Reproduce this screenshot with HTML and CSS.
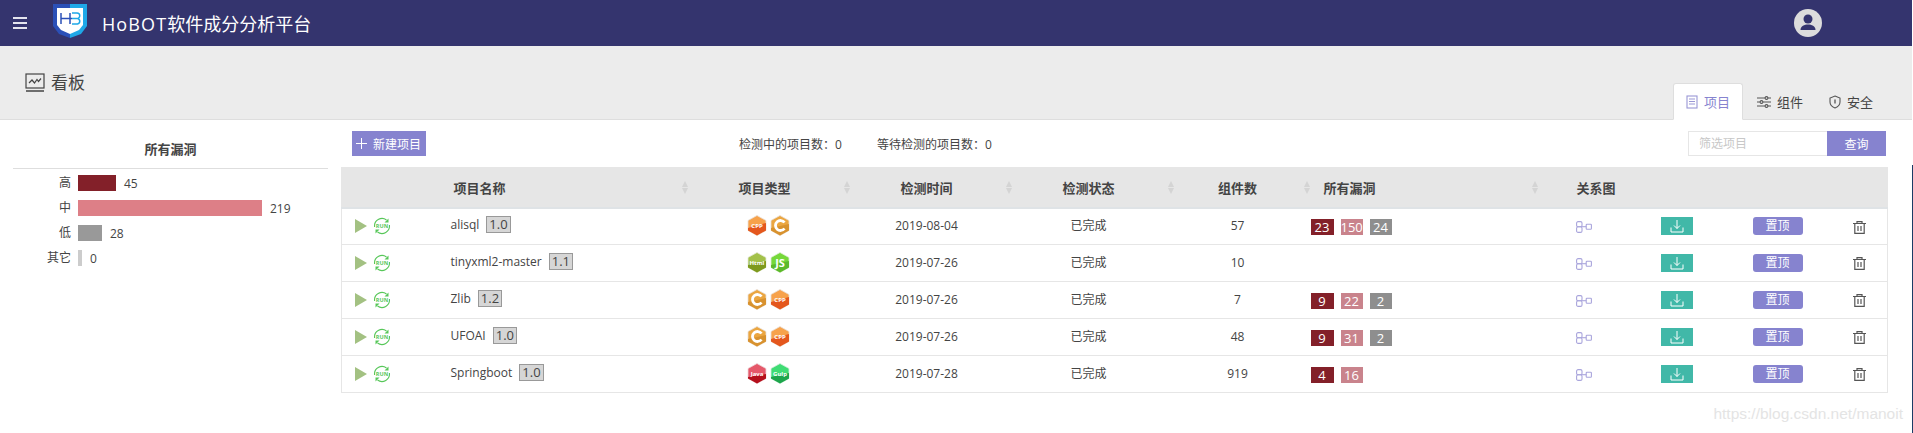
FILE: index.html
```html
<!DOCTYPE html>
<html lang="zh-CN">
<head>
  <meta charset="UTF-8">
  <title>HoBOT软件成分分析平台</title>
  <link rel="stylesheet" href="styles.css">
</head>
<body>
  <svg class="defs" aria-hidden="true">
    <symbol id="i-play" viewBox="0 0 12 14"><path d="M0 0l12 7-12 7z" fill="#a3c182"/></symbol>
    <symbol id="i-arcs" viewBox="0 0 18 18">
      <g fill="none" stroke="#58c75a" stroke-width="1.1">
        <path d="M1.600 10A7.500 7.500 0 0 1 13.500 3"/>
        <path d="M16.400 8A7.500 7.500 0 0 1 4.500 15"/>
      </g>
      <path d="M15.500 1.500v4h-4zM2.500 16.500v-4h4z" fill="#58c75a"/>
    </symbol>
    <symbol id="i-rel" viewBox="0 0 16 12">
      <g fill="none" stroke="#a9a5dc" stroke-width="1.100">
        <rect x="0.600" y="0.600" width="5.400" height="5.200" rx="1.500"/>
        <rect x="0.600" y="5.800" width="5.400" height="5.600" rx="1.500"/>
        <rect x="10.200" y="3.200" width="5.200" height="5" rx="0.800"/>
        <path d="M6 5.700h4.200"/>
      </g>
    </symbol>
    <symbol id="i-down" viewBox="0 0 14 14">
      <g fill="none" stroke="#fff" stroke-width="1">
        <path d="M7 1v8.500M4 6.500L7 9.500l3-3"/>
        <path d="M1 8.500v4.500h12V8.500"/>
      </g>
    </symbol>
    <symbol id="i-trash" viewBox="0 0 13 13">
      <g fill="none" stroke="#555" stroke-width="1.200">
        <path d="M0 2.500h13M4 2.500V.7h5v1.800M1.800 2.500v9.800h9.400V2.500M5 5v5M8 5v5"/>
      </g>
    </symbol>
    <symbol id="h-orange" viewBox="0 0 20 21">
      <path d="M10 .5l9 5v10l-9 5-9-5v-10z" fill="#f7a24b" stroke="#e8e0d8" stroke-width="0.800"/>
      <path d="M19 8v7.500l-9 5-9-5V13z" fill="#e4571d"/>
    </symbol>
    <symbol id="h-amber" viewBox="0 0 20 21">
      <path d="M10 .5l9 5v10l-9 5-9-5v-10z" fill="#eba640" stroke="#e8e0d8" stroke-width="0.800"/>
      <path d="M19 9v6.500l-9 5-9-5V13z" fill="#d8922f"/>
      <path d="M14.500 7.500a5 5 0 1 0 0 6" fill="none" stroke="#fff" stroke-width="2.800"/>
    </symbol>
    <symbol id="h-olive" viewBox="0 0 20 21">
      <path d="M10 .5l9 5v10l-9 5-9-5v-10z" fill="#a3c14a" stroke="#e4e8d8" stroke-width="0.800"/>
      <path d="M19 9v6.500l-9 5-9-5V13z" fill="#7e9a1e"/>
    </symbol>
    <symbol id="h-lime" viewBox="0 0 20 21">
      <path d="M10 .5l9 5v10l-9 5-9-5v-10z" fill="#76d83a" stroke="#e0eed8" stroke-width="0.800"/>
      <path d="M19 9v6.500l-9 5-9-5V13z" fill="#5cb92a"/>
    </symbol>
    <symbol id="h-red" viewBox="0 0 20 21">
      <path d="M10 .5l9 5v10l-9 5-9-5v-10z" fill="#e5586a" stroke="#eed8da" stroke-width="0.800"/>
      <path d="M19 11v4.500l-9 5-9-5V14z" fill="#b4101c"/>
    </symbol>
    <symbol id="h-green" viewBox="0 0 20 21">
      <path d="M10 .5l9 5v10l-9 5-9-5v-10z" fill="#3fdc74" stroke="#d8eede" stroke-width="0.800"/>
      <path d="M19 10v5.500l-9 5-9-5V14z" fill="#1ea54c"/>
    </symbol>
  </svg>

  <header class="topbar">
    <div class="menu-btn"><span></span><span></span><span></span></div>
    <svg class="logo" viewBox="0 0 34 34">
      <path d="M0 0h17v34L6 30 0 22z" fill="#2b50b8"/>
      <path d="M17 0h17v22l-6 8-11 4z" fill="#1fa8e8"/>
      <path d="M4 4h26v17l-4 5-9 4-9-4-4-5z" fill="#fff"/>
      <g fill="none" stroke-width="1.500">
        <path d="M8 9v11M8 14.500h11M17 9v11" stroke="#2b50b8"/>
        <path d="M19 9h5a2.500 2.500 0 0 1 0 5.500h-5M19 14.500h5.500a2.800 2.800 0 0 1 0 5.500H19" stroke="#1fa8e8"/>
      </g>
    </svg>
    <span class="brand"><span class="brand-en">HoBOT</span>软件成分分析平台</span>
    <svg class="avatar" viewBox="0 0 28 28">
      <circle cx="14" cy="14" r="14" fill="#dcdcdc"/>
      <circle cx="14" cy="10" r="4.500" fill="#34346e"/>
      <path d="M6.500 21c0-4 4-5.500 7.500-5.500s7.500 1.500 7.500 5.500z" fill="#34346e"/>
    </svg>
  </header>

  <section class="subhead">
    <h2 class="page-title">
      <svg class="title-icon" viewBox="0 0 20 20">
        <g fill="none" stroke="#444" stroke-width="1.200">
          <rect x="1" y="1" width="18" height="14"/>
          <path d="M4 10l3-3 2.500 3L12 6.500l1.500 2L16 5.500"/>
        </g>
        <path d="M1 18h18" stroke="#444" stroke-width="1.500"/>
      </svg>
      看板
    </h2>
    <nav class="tabs">
      <a class="tab active">
        <svg class="tab-icon" viewBox="0 0 12 14">
          <g fill="none" stroke="#9a97d6" stroke-width="1.100">
            <rect x="1" y="1" width="10" height="12"/>
            <path d="M3 4h6M3 6.500h6M3 9h6"/>
          </g>
        </svg>
        项目
      </a>
      <a class="tab">
        <svg class="tab-icon wide" viewBox="0 0 14 12">
          <g fill="none" stroke="#555" stroke-width="1.100">
            <path d="M0 2h8M11 2h3M0 6h3M6 6h8M0 10h8M11 10h3"/>
            <circle cx="9.500" cy="2" r="1.400"/>
            <circle cx="4.500" cy="6" r="1.400"/>
            <circle cx="9.500" cy="10" r="1.400"/>
          </g>
        </svg>
        组件
      </a>
      <a class="tab">
        <svg class="tab-icon" viewBox="0 0 12 14">
          <path d="M6 1l5 2v4c0 3-2.500 5-5 6-2.500-1-5-3-5-6V3z" fill="none" stroke="#555" stroke-width="1.100"/>
          <path d="M6 4.500v4" stroke="#555" stroke-width="1.300"/>
        </svg>
        安全
      </a>
    </nav>
  </section>

  <main class="content">
    <aside class="side">
      <h3 class="side-title">所有漏洞</h3>
      <div class="bars">
        <span class="bar-label">高</span>
        <div class="bar-wrap"><i class="bar high" style="width:38px"></i>45</div>
        <span class="bar-label">中</span>
        <div class="bar-wrap"><i class="bar mid" style="width:184px"></i>219</div>
        <span class="bar-label">低</span>
        <div class="bar-wrap"><i class="bar low" style="width:24px"></i>28</div>
        <span class="bar-label">其它</span>
        <div class="bar-wrap"><i class="bar other" style="width:4px"></i>0</div>
      </div>
    </aside>

    <div class="panel">
      <div class="toolbar">
        <button class="new-btn">
          <svg class="plus" viewBox="0 0 11 11"><path d="M5.500 0v11M0 5.500h11" stroke="#fff" stroke-width="1"/></svg>
          新建项目
        </button>
        <div class="counts">
          <span>检测中的项目数：0</span>
          <span>等待检测的项目数：0</span>
        </div>
        <div class="search">
          <input class="search-input" placeholder="筛选项目">
          <button class="search-btn">查询</button>
        </div>
      </div>

      <table class="projects">
        <colgroup>
          <col class="c-run"><col class="c-name"><col class="c-type"><col class="c-time"><col class="c-state">
          <col class="c-count"><col class="c-vuln"><col class="c-rel"><col class="c-down"><col class="c-pin"><col class="c-del">
        </colgroup>
        <thead>
          <tr>
            <th></th>
            <th class="left sort">项目名称</th>
            <th class="sort">项目类型</th>
            <th class="sort">检测时间</th>
            <th class="sort">检测状态</th>
            <th class="sort">组件数</th>
            <th class="left sort vuln-head">所有漏洞</th>
            <th class="left rel-head">关系图</th>
            <th></th><th></th><th></th>
          </tr>
        </thead>
        <tbody>
          <tr>
            <td class="run-cell"><svg class="play"><use href="#i-play"/></svg><svg class="run" viewBox="0 0 18 18"><use href="#i-arcs"/><text x="9" y="11" class="run-text">RUN</text></svg></td>
            <td class="name">alisql<span class="ver">1.0</span></td>
            <td class="hexes">
              <svg class="hex" viewBox="0 0 20 21"><use href="#h-orange"/><text x="10" y="12.500" class="hex-small">CPP</text></svg>
              <svg class="hex" viewBox="0 0 20 21"><use href="#h-amber"/></svg>
            </td>
            <td>2019-08-04</td><td>已完成</td><td>57</td>
            <td class="vulns"><span class="v high">23</span><span class="v mid">150</span><span class="v low">24</span></td>
            <td class="rel"><svg class="rel-icon"><use href="#i-rel"/></svg></td>
            <td><button class="down-btn"><svg class="down-icon"><use href="#i-down"/></svg></button></td>
            <td><button class="pin-btn">置顶</button></td>
            <td><svg class="trash"><use href="#i-trash"/></svg></td>
          </tr>
          <tr>
            <td class="run-cell"><svg class="play"><use href="#i-play"/></svg><svg class="run" viewBox="0 0 18 18"><use href="#i-arcs"/><text x="9" y="11" class="run-text">RUN</text></svg></td>
            <td class="name">tinyxml2-master<span class="ver">1.1</span></td>
            <td class="hexes">
              <svg class="hex" viewBox="0 0 20 21"><use href="#h-olive"/><text x="10" y="13" class="hex-small">Html</text></svg>
              <svg class="hex" viewBox="0 0 20 21"><use href="#h-lime"/><text x="10" y="14.500" class="hex-big">JS</text></svg>
            </td>
            <td>2019-07-26</td><td>已完成</td><td>10</td>
            <td class="vulns"></td>
            <td class="rel"><svg class="rel-icon"><use href="#i-rel"/></svg></td>
            <td><button class="down-btn"><svg class="down-icon"><use href="#i-down"/></svg></button></td>
            <td><button class="pin-btn">置顶</button></td>
            <td><svg class="trash"><use href="#i-trash"/></svg></td>
          </tr>
          <tr>
            <td class="run-cell"><svg class="play"><use href="#i-play"/></svg><svg class="run" viewBox="0 0 18 18"><use href="#i-arcs"/><text x="9" y="11" class="run-text">RUN</text></svg></td>
            <td class="name">Zlib<span class="ver">1.2</span></td>
            <td class="hexes">
              <svg class="hex" viewBox="0 0 20 21"><use href="#h-amber"/></svg>
              <svg class="hex" viewBox="0 0 20 21"><use href="#h-orange"/><text x="10" y="12.500" class="hex-small">CPP</text></svg>
            </td>
            <td>2019-07-26</td><td>已完成</td><td>7</td>
            <td class="vulns"><span class="v high">9</span><span class="v mid">22</span><span class="v low">2</span></td>
            <td class="rel"><svg class="rel-icon"><use href="#i-rel"/></svg></td>
            <td><button class="down-btn"><svg class="down-icon"><use href="#i-down"/></svg></button></td>
            <td><button class="pin-btn">置顶</button></td>
            <td><svg class="trash"><use href="#i-trash"/></svg></td>
          </tr>
          <tr>
            <td class="run-cell"><svg class="play"><use href="#i-play"/></svg><svg class="run" viewBox="0 0 18 18"><use href="#i-arcs"/><text x="9" y="11" class="run-text">RUN</text></svg></td>
            <td class="name">UFOAI<span class="ver">1.0</span></td>
            <td class="hexes">
              <svg class="hex" viewBox="0 0 20 21"><use href="#h-amber"/></svg>
              <svg class="hex" viewBox="0 0 20 21"><use href="#h-orange"/><text x="10" y="12.500" class="hex-small">CPP</text></svg>
            </td>
            <td>2019-07-26</td><td>已完成</td><td>48</td>
            <td class="vulns"><span class="v high">9</span><span class="v mid">31</span><span class="v low">2</span></td>
            <td class="rel"><svg class="rel-icon"><use href="#i-rel"/></svg></td>
            <td><button class="down-btn"><svg class="down-icon"><use href="#i-down"/></svg></button></td>
            <td><button class="pin-btn">置顶</button></td>
            <td><svg class="trash"><use href="#i-trash"/></svg></td>
          </tr>
          <tr>
            <td class="run-cell"><svg class="play"><use href="#i-play"/></svg><svg class="run" viewBox="0 0 18 18"><use href="#i-arcs"/><text x="9" y="11" class="run-text">RUN</text></svg></td>
            <td class="name">Springboot<span class="ver">1.0</span></td>
            <td class="hexes">
              <svg class="hex" viewBox="0 0 20 21"><use href="#h-red"/><text x="10" y="13" class="hex-small">Java</text></svg>
              <svg class="hex" viewBox="0 0 20 21"><use href="#h-green"/><text x="10" y="13" class="hex-small">Gulp</text></svg>
            </td>
            <td>2019-07-28</td><td>已完成</td><td>919</td>
            <td class="vulns"><span class="v high">4</span><span class="v mid">16</span></td>
            <td class="rel"><svg class="rel-icon"><use href="#i-rel"/></svg></td>
            <td><button class="down-btn"><svg class="down-icon"><use href="#i-down"/></svg></button></td>
            <td><button class="pin-btn">置顶</button></td>
            <td><svg class="trash"><use href="#i-trash"/></svg></td>
          </tr>
        </tbody>
      </table>
    </div>
  </main>

  <div class="watermark">https://blog.csdn.net/manoit</div>
</body>
</html>
```

FILE: styles.css
```css
* {
  box-sizing: border-box;
}

html, body {
  margin: 0;
  padding: 0;
  height: 100%;
  overflow: hidden;
}

body {
  position: relative;
  background: #fff;
  color: #444;
  font-family: "Open Sans", "Noto Sans CJK SC", sans-serif;
  font-size: 12px;
}

/* thin strip down the right edge of the capture */
body::after {
  content: "";
  position: absolute;
  top: 0;
  right: 0;
  bottom: 0;
  width: 1px;
  background: linear-gradient(#fff 0 165px, #1c3c66 165px);
}

.defs {
  position: absolute;
  width: 0;
  height: 0;
}

.run-text {
  font-size: 5.5px;
  font-weight: 700;
  fill: #58c75a;
  text-anchor: middle;
}

.hex-small {
  font-size: 6px;
  font-weight: 700;
  fill: #fff;
  text-anchor: middle;
}

.hex-big {
  font-size: 11px;
  font-weight: 700;
  fill: #fff;
  text-anchor: middle;
}

/* top bar */
.topbar {
  display: flex;
  align-items: center;
  height: 46px;
  background: #34346e;
  color: #fff;
}

.menu-btn {
  display: flex;
  flex-direction: column;
  gap: 3px;
  width: 14px;
  margin-left: 13px;
}

.menu-btn span {
  display: block;
  height: 2px;
  background: #e4e4ee;
}

.logo {
  width: 34px;
  height: 34px;
  margin: -5px 0 0 26px;
}

.brand {
  margin-left: 15px;
  font-size: 18px;
}

.brand-en {
  letter-spacing: 1.1px;
}

.avatar {
  width: 28px;
  height: 28px;
  margin-left: auto;
  margin-right: 91px;
}

/* title strip + tabs */
.subhead {
  display: flex;
  justify-content: space-between;
  align-items: flex-end;
  height: 74px;
  padding: 0 26px 0 25px;
  background: #ececec;
  border-bottom: 1px solid #dedede;
}

.page-title {
  display: flex;
  align-items: center;
  gap: 6px;
  align-self: flex-start;
  margin: 25px 0 0;
  font-size: 17px;
  font-weight: 400;
  line-height: 24px;
  color: #444;
}

.title-icon {
  width: 20px;
  height: 20px;
}

.tabs {
  display: flex;
  margin-bottom: -1px;
}

.tab {
  display: flex;
  align-items: center;
  gap: 6px;
  height: 37px;
  padding: 0 12px;
  margin-right: 2px;
  font-size: 13px;
  color: #444;
}

.tab.active {
  width: 70px;
  background: #fff;
  color: #8683cf;
  border: 1px solid #dedede;
  border-bottom: 1px solid #fff;
  border-radius: 3px 3px 0 0;
}

.tab-icon {
  width: 12px;
  height: 14px;
}

.tab-icon.wide {
  width: 14px;
  height: 12px;
}

/* page body */
.content {
  display: flex;
}

.side {
  width: 341px;
  flex: none;
  padding: 0 13px;
}

.side-title {
  margin: 0;
  height: 49px;
  padding-top: 19px;
  font-size: 13px;
  font-weight: 700;
  line-height: 20px;
  text-align: center;
  color: #444;
  border-bottom: 1px solid #dedede;
}

.bars {
  display: grid;
  grid-template-columns: 58px 1fr;
  column-gap: 7px;
  row-gap: 9px;
  padding-top: 6px;
}

.bar-label {
  text-align: right;
  line-height: 16px;
}

.bar-wrap {
  display: flex;
  align-items: center;
  height: 16px;
  gap: 8px;
}

.bar {
  display: block;
  height: 16px;
}

.bar.high { background: #832029; }
.bar.mid { background: #dd7f87; }
.bar.low { background: #999; }
.bar.other { background: #ccc; }

.panel {
  width: 1546px;
  flex: none;
}

.toolbar {
  display: flex;
  align-items: center;
  height: 47px;
  padding: 0 1px 0 11px;
}

.new-btn {
  display: flex;
  align-items: center;
  gap: 6px;
  width: 74px;
  height: 25px;
  padding: 0 0 0 4px;
  border: 0;
  background: #8683cf;
  color: #fff;
  font: inherit;
}

.plus {
  width: 11px;
  height: 11px;
  flex: none;
}

.counts {
  display: flex;
  gap: 35px;
  margin-left: 313px;
}

.search {
  display: flex;
  margin-left: auto;
}

.search-input {
  width: 139px;
  height: 25px;
  padding: 0 10px;
  border: 1px solid #e6e6e6;
  border-right: 0;
  font: inherit;
  outline: none;
}

.search-input::placeholder {
  color: #c8c8c8;
}

.search-btn {
  width: 59px;
  height: 25px;
  border: 0;
  background: #8683cf;
  color: #fff;
  font: inherit;
}

/* table */
.projects {
  width: 1546px;
  table-layout: fixed;
  border-collapse: collapse;
  border: 1px solid #e6e6e6;
}

.c-run { width: 107px; }
.c-name { width: 242px; }
.c-type, .c-time, .c-state { width: 162px; }
.c-count { width: 136px; }
.c-vuln { width: 228px; }
.c-rel, .c-down { width: 91px; }
.c-pin { width: 110px; }
.c-del { width: 55px; }

.projects th {
  height: 40px;
  padding: 0 14px 0 0;
  background: #e6e6e6;
  border-bottom: 2px solid #dfe3e6;
  font-size: 13px;
  font-weight: 700;
  color: #444;
  position: relative;
}

.projects th.left { text-align: left; padding-left: 5px; }
.projects th.vuln-head { padding-left: 11px; }
.projects th.rel-head { padding-left: 36px; }

/* sort arrows */
.sort::before,
.sort::after {
  content: "";
  position: absolute;
  right: 3px;
  border: 3.500px solid transparent;
}

.sort::before {
  top: 13px;
  border-bottom: 6px solid #d4d4d4;
  border-top: 0;
}

.sort::after {
  top: 20px;
  border-top: 6px solid #d4d4d4;
  border-bottom: 0;
}

.projects td {
  height: 37px;
  padding: 0 14px 0 0;
  text-align: center;
  border-bottom: 1px solid #e6e6e6;
  line-height: 16px;
}

.projects td:nth-child(n+8) {
  padding-right: 0;
}

.projects td svg,
.projects td button {
  vertical-align: middle;
}

.projects td.run-cell {
  padding: 0 0 0 13px;
  text-align: left;
}

.play {
  width: 12px;
  height: 14px;
}

.run {
  width: 18px;
  height: 18px;
  margin-left: 6px;
}

.projects td.name {
  padding: 0 0 3px 2px;
  text-align: left;
}

.ver {
  display: inline-block;
  height: 17px;
  margin-left: 7px;
  padding: 0 2px;
  background: #d6d6d6;
  border: 1px solid #999;
  font-size: 13px;
  line-height: 15px;
}

.projects td.hexes {
  padding-right: 6px;
  padding-bottom: 2px;
}

.hex {
  width: 20px;
  height: 21px;
}

.projects td.vulns {
  padding: 3px 0 0;
  text-align: left;
}

.v {
  display: inline-block;
  width: 22px;
  height: 16px;
  margin-right: 7px;
  color: #fff;
  font-size: 13px;
  line-height: 16px;
  text-align: center;
}

.v:first-child {
  width: 23px;
  margin-left: -2px;
}

.v.high { background: #832029; }
.v.mid { background: #c9838c; }
.v.low { background: #8e8e8e; }

.projects td.rel {
  text-align: left;
  padding-left: 35px;
}

.rel-icon {
  width: 16px;
  height: 12px;
}

.down-btn,
.pin-btn {
  height: 18px;
  padding: 0;
  border: 0;
  color: #fff;
  font: inherit;
  line-height: 18px;
}

.down-btn {
  width: 32px;
  background: #41b8a8;
  display: inline-flex;
  align-items: center;
  justify-content: center;
}

.down-icon {
  width: 14px;
  height: 14px;
}

.pin-btn {
  width: 50px;
  background: #8683cf;
  border-radius: 3px;
}

.trash {
  width: 13px;
  height: 13px;
}

.watermark {
  position: absolute;
  right: 10px;
  top: 405px;
  font-family: "Liberation Sans", sans-serif;
  font-size: 15.500px;
  color: #e4e4e4;
}
```
